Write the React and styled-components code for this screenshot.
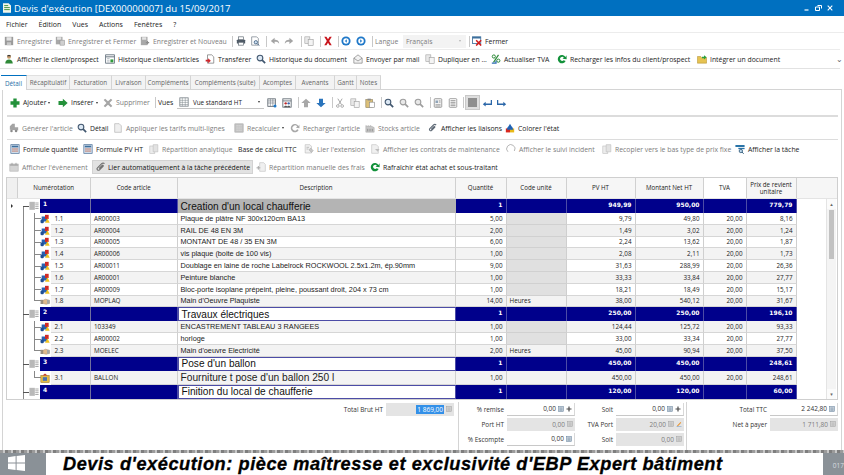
import React from "react";
import styled, { createGlobalStyle } from "styled-components";

const GlobalStyle = createGlobalStyle`
	html, body {
		margin: 0;
		padding: 0;
		background: #fff;
	}
	#root {
		width: 844px;
		height: 475px;
		overflow: hidden;
	}
`;

const UI = `"Open Sans", "Noto Sans", sans-serif`;
const NAVY = "#00008b";
const DIM = "#7d7d7d";

const Ico = ({ name, size = 10 }) => (
	<IconBox $size={size}>
		<svg width={size} height={size} viewBox="0 0 12 12">
			{shapes[name]}
		</svg>
	</IconBox>
);

const shapes = {
	save: <><rect x="1" y="1" width="10" height="10" fill="#9a9a9a" /><rect x="3" y="1.5" width="6" height="4" fill="#e4e4e4" /><rect x="3.5" y="7.5" width="5" height="3.5" fill="#c8c8c8" /></>,
	saveClose: <><rect x="1" y="1" width="8" height="9" fill="#a8a8a8" /><rect x="2.5" y="1.5" width="5" height="3" fill="#e4e4e4" /><rect x="6" y="5" width="5.5" height="6" fill="#cfcfcf" stroke="#8e8e8e" strokeWidth=".6" /></>,
	saveNew: <><rect x="1" y="1" width="8" height="10" fill="#a8a8a8" /><rect x="2.5" y="1.5" width="5" height="3" fill="#e4e4e4" /><path d="M7 8h4M9 6v4" stroke="#8c8c8c" strokeWidth="1.4" /></>,
	print: <><rect x="3" y="1" width="6" height="3.5" fill="#fff" stroke="#5c6670" strokeWidth=".8" /><rect x="1" y="4.5" width="10" height="4.5" rx=".6" fill="#4f5a66" /><rect x="3" y="7.5" width="6" height="3.5" fill="#fff" stroke="#5c6670" strokeWidth=".8" /></>,
	preview: <><path d="M2 1h6l2 2v8H2z" fill="#fff" stroke="#6b7580" strokeWidth=".8" /><circle cx="7" cy="7.5" r="2" fill="#cfe2f2" stroke="#3f5e80" /><path d="M8.5 9l2.5 2.5" stroke="#3f5e80" strokeWidth="1.2" /></>,
	back: <path d="M1 6l4.5-4v2.4c3 0 5.5 1 5.5 5-1.2-2-3-2.4-5.5-2.4V9.5z" fill="#a4a4a4" />,
	forward: <path d="M11 6L6.5 2v2.4c-3 0-5.5 1-5.5 5 1.2-2 3-2.4 5.5-2.4v2.5z" fill="#a4a4a4" />,
	copy: <><rect x="1" y="1" width="6" height="8" fill="#e8e8e8" stroke="#a0a0a0" strokeWidth=".7" /><rect x="5" y="4" width="6" height="7.5" fill="#f4f4f4" stroke="#9a9a9a" strokeWidth=".7" /></>,
	redX: <path d="M1.5 1h2.6L6 3.8 7.9 1h2.6L7.4 6l3.1 5H7.9L6 8.2 4.1 11H1.5l3.1-5z" fill="#c8141c" />,
	circleL: <><circle cx="6" cy="6" r="5.5" fill="#1f78c8" /><circle cx="6" cy="6" r="3.3" fill="#fff" /><path d="M7 3.8L4.6 6 7 8.2z" fill="#1f78c8" /></>,
	circleR: <><circle cx="6" cy="6" r="5.5" fill="#1f78c8" /><circle cx="6" cy="6" r="3.3" fill="#fff" /><path d="M5 3.8L7.4 6 5 8.2z" fill="#1f78c8" /></>,
	closeWin: <><rect x=".5" y="1" width="10" height="8" fill="#fff" stroke="#3d6f9c" /><rect x=".5" y="1" width="10" height="2" fill="#3d6f9c" /><path d="M5 5l6 6.5M11 5l-6 6.5" stroke="#d01c1c" strokeWidth="1.8" /></>,
	person: <><circle cx="6" cy="3.4" r="2.4" fill="#c79a6a" /><path d="M1.5 11.5c0-3.5 2-4.8 4.5-4.8s4.5 1.3 4.5 4.8z" fill="#2f8a38" /><path d="M3.6 2.6c.6-2 4.2-2 4.8 0z" fill="#3a3a3a" /></>,
	history: <><rect x=".8" y="1" width="10.4" height="10" fill="#fff" stroke="#4a5a68" strokeWidth=".9" /><path d="M1 3.4h10" stroke="#4a5a68" /><rect x="6.5" y="6.5" width="3.5" height="3.5" fill="#2f9a3c" /><path d="M2.5 5.5h3M2.5 7.5h3M2.5 9.5h3" stroke="#9aa4ac" strokeWidth=".8" /></>,
	transfer: <><path d="M3 1h5l2.5 2.5V11H3z" fill="#fff" stroke="#6a6a6a" strokeWidth=".8" /><path d="M.8 7h3V5l3.2 3-3.2 3V9h-3z" fill="#d0242a" /></>,
	search: <><circle cx="4.8" cy="4.8" r="3.4" fill="#dce8f4" stroke="#40566e" strokeWidth="1.3" /><path d="M7.4 7.4l3.6 3.6" stroke="#40566e" strokeWidth="2" /></>,
	searchDim: <><circle cx="4.8" cy="4.8" r="3.4" fill="#e8e8e8" stroke="#9d9d9d" strokeWidth="1.3" /><path d="M7.4 7.4l3.6 3.6" stroke="#9d9d9d" strokeWidth="2" /></>,
	mail: <><path d="M1 5l5-4 5 4v6H1z" fill="#f2f2f2" stroke="#7b7b7b" strokeWidth=".8" /><path d="M1 5l5 3.4L11 5" fill="none" stroke="#7b7b7b" strokeWidth=".8" /></>,
	tva: <><circle cx="3.4" cy="3" r="1.9" fill="none" stroke="#2e8a3a" strokeWidth="1.2" /><circle cx="8.8" cy="8" r="1.9" fill="none" stroke="#2e8a3a" strokeWidth="1.2" /><path d="M9 1L3 10" stroke="#2e8a3a" strokeWidth="1.4" /><path d="M1 11h5V8" fill="none" stroke="#2c6cb4" strokeWidth="1.5" /></>,
	reload: <path d="M10.2 3.6A5 5 0 1 0 10.4 8.4L8 7.4A2.4 2.4 0 1 1 8.2 4.4L6.6 5.6 11.6 6.4 11.4 1.4z" fill="#12913a" />,
	reloadDim: <path d="M10.2 3.6A5 5 0 1 0 10.4 8.4L8.6 7.6A3 3 0 1 1 8.6 4.6L7 5.8 11.4 6.2 11.2 1.8z" fill="#a8a8a8" />,
	folder: <><path d="M.5 3h4l1 1.4h6V11H.5z" fill="#e6c352" stroke="#ad8a2c" strokeWidth=".6" /><path d="M6 3.4h2.4V1.4L11.6 4 8.4 6.6V5H6z" fill="#2ca03c" /></>,
	plus: <path d="M4 .6h4V4h3.4v4H8v3.4H4V8H.6V4H4z" fill="#23913a" />,
	arrowR: <path d="M.6 3.6h5.2V.8L11.6 6l-5.8 5.2V8.4H.6z" fill="#23913a" />,
	greyX: <path d="M.8 2.4L2.6.8 6 4l3.4-3.2 1.8 1.6L7.8 6l3.4 3.6-1.8 1.6L6 8 2.6 11.2.8 9.6 4.2 6z" fill="#a6a6a6" />,
	table: <><rect x="1" y="1" width="10" height="10" fill="#fff" stroke="#7a8288" /><path d="M1 4h10M1 6.5h10M1 9h10M4 1v10M7.5 1v10" stroke="#7a8288" strokeWidth=".6" /></>,
	tableBlue: <><rect x="1" y="1" width="9" height="9" fill="#fff" stroke="#59636c" /><path d="M1 3.5h9M1 6h9M4 1v9M7 1v9" stroke="#59636c" strokeWidth=".6" /><circle cx="9.6" cy="9.6" r="1.8" fill="#1f78c8" /></>,
	tablePeople: <><rect x="1" y="1" width="10" height="10" fill="#fff" stroke="#59636c" /><path d="M1 3.5h10" stroke="#59636c" /><circle cx="4.4" cy="6.4" r="1.4" fill="#c02828" /><circle cx="8" cy="6.4" r="1.4" fill="#3a62a8" /><path d="M2.6 11c0-2.2 3.6-2.2 3.6 0zM6.2 11c0-2.2 3.6-2.2 3.6 0z" fill="#555" /></>,
	up: <path d="M6 .8L11.6 6H8.4v5.2H3.6V6H.4z" fill="#a8a8a8" />,
	down: <path d="M6 11.2L11.6 6H8.4V.8H3.6V6H.4z" fill="#2a74bc" />,
	scissors: <><path d="M3.4 .8L7.8 8M8.6 .8L4.2 8" stroke="#a0a0a0" strokeWidth="1.1" /><circle cx="3.4" cy="9.6" r="1.6" fill="none" stroke="#a0a0a0" strokeWidth="1" /><circle cx="8.6" cy="9.6" r="1.6" fill="none" stroke="#a0a0a0" strokeWidth="1" /></>,
	paste: <><rect x="1" y="2" width="8" height="9.4" fill="#dcc078" stroke="#8a7a50" strokeWidth=".7" /><rect x="3" y=".8" width="4" height="2.2" fill="#8a8a8a" /><rect x="5.4" y="5" width="6" height="6.6" fill="#fff" stroke="#808080" strokeWidth=".7" /></>,
	form: <><rect x="1.5" y=".8" width="9" height="10.4" rx="1" fill="#f2f2f2" stroke="#777" strokeWidth=".8" /><rect x="3" y="3" width="3" height="3" fill="#8fa4b8" /><path d="M3 8h6M3 9.6h6M7 3.4h2M7 5h2" stroke="#777" strokeWidth=".7" /></>,
	lines: <><rect x="1.5" y=".8" width="9" height="10.4" rx="1" fill="#fff" stroke="#777" strokeWidth=".8" /><path d="M3 3.2h6M3 5.2h6M3 7.2h6M3 9.2h6" stroke="#666" strokeWidth=".8" /></>,
	enterL: <path d="M10.5 2.5V6.6H4.4V4.6L1 7.4l3.4 2.8V8.4h7.9V2.5z" fill="#2a66a8" />,
	enterR: <path d="M1.5 2.5V6.6h6.1V4.6L11 7.4 7.6 10.2V8.4H-.2V2.5z" fill="#2a66a8" />,
	gen: <><path d="M1 8V4l3-3h3v4h4v4z" fill="#a4a4a4" /><circle cx="3" cy="9.5" r="1.5" fill="#8a8a8a" /><circle cx="8.5" cy="9.5" r="1.5" fill="#8a8a8a" /></>,
	doc: <path d="M2 .8h5.4L10 3.4v7.8H2z" fill="#efefef" stroke="#b4b4b4" strokeWidth=".8" />,
	calc: <><rect x="1" y="1" width="10" height="10" fill="#c2c2c2" stroke="#a0a0a0" strokeWidth=".6" /><path d="M3 3.4h6M3 6h6M3 8.6h6" stroke="#e8e8e8" strokeWidth="1" strokeDasharray="1.4 1" /></>,
	stocks: <><path d="M1 11V3l2.5 1.5V3L6 4.5V3l5 2.5V11z" fill="#c8c8c8" stroke="#a2a2a2" strokeWidth=".6" /><path d="M3 7v3M5 7v3M7 7v3M9 7v3" stroke="#8a8a8a" strokeWidth=".8" /></>,
	clip: <path d="M9.8 2.4c-1-1-2.4-.8-3.2 0L2.2 6.8c-1.4 1.4.8 3.4 2.2 2L8 5.2c.6-.6-.2-1.4-.8-.8L3.8 7.8" fill="none" stroke="#5f6a76" strokeWidth="1.3" />,
	clipBold: <path d="M10.2 2c-1-1-2.6-.8-3.4 0L1.8 7c-1.6 1.6.8 4 2.4 2.4l4.2-4.2c.8-.8-.2-1.8-1-1l-3.6 3.6" fill="none" stroke="#737373" strokeWidth="1.4" />,
	color: <><path d="M6 .8L9.5 7H2.5z" fill="#1f62b4" /><rect x="1" y="6.5" width="5" height="4.8" fill="#d8281e" /><rect x="6" y="6.5" width="5" height="4.8" fill="#e8b818" /><path d="M3.6 4.6h4.8L10 8H2z" fill="#1f62b4" /></>,
	calcBlue: <><rect x="1" y=".8" width="10" height="10.4" fill="#cfdcea" stroke="#4a6f96" strokeWidth=".8" /><rect x="2.2" y="2" width="7.6" height="2" fill="#3d6f9c" /><path d="M2.6 6h2M5 6h2M7.4 6h2M2.6 8.5h2M5 8.5h2M7.4 8.5h2" stroke="#c05a3c" strokeWidth="1" /></>,
	analytics: <><rect x="1" y="2.4" width="6" height="8.8" fill="#ececec" stroke="#bcbcbc" strokeWidth=".7" /><path d="M5 .8h5.6v8.6H5z" fill="#e2e2e2" stroke="#bcbcbc" strokeWidth=".7" /></>,
	ext: <><path d="M1.4 .8h5.6l2 2v8H1.4z" fill="#efefef" stroke="#b8b8b8" strokeWidth=".7" /><path d="M6 7l2-2 3 3-2 2zM3 4h3M3 6h2" stroke="#a8a8a8" strokeWidth=".8" fill="#c8c8c8" /></>,
	contract: <><path d="M2 .8h5.6L10 3.2v8H2z" fill="#f0f0f0" stroke="#bdbdbd" strokeWidth=".7" /><path d="M6 6h5.4L9.4 9.4z" fill="#bdbdbd" /></>,
	incident: <path d="M2.4 9.4A5 5 0 1 1 10 8.4" fill="none" stroke="#b0b0b0" strokeWidth="1.1" />,
	task: <><rect x=".5" y="1.2" width="11" height="2.4" fill="#2a74a8" /><rect x="4" y="4.6" width="7.5" height="1.6" fill="#2a74a8" /><circle cx="7" cy="8.4" r="2" fill="#bcd6ea" stroke="#2c5878" /><path d="M8.4 9.8l2 1.8" stroke="#2c5878" strokeWidth="1.2" /></>,
	event: <><rect x="1" y="2.4" width="10" height="8.6" fill="#d4d4d4" stroke="#aeaeae" strokeWidth=".7" /><rect x="1" y="2.4" width="10" height="2.4" fill="#b4b4b4" /><path d="M3.6 1v2.4M8.4 1v2.4" stroke="#9a9a9a" /></>,
	manual: <><path d="M4.4 .8h4.8l2 2v8.4H4.4z" fill="#f0f0f0" stroke="#bdbdbd" strokeWidth=".7" /><path d="M.6 7h4.6M2.8 4.8v4.4" stroke="#a8a8a8" strokeWidth="1.2" /></>,
	groupNode: <><rect x=".5" y="1" width="6.5" height="9.6" fill="#b8b8b8" /><path d="M7.5 2.4h4M7.5 4.6h4M7.5 6.8h4M7.5 9h4" stroke="#9a9a9a" /></>,
	article: <><rect x="2" y="3" width="6.4" height="6" fill="#2a62b0" /><rect x="6" y="1" width="4.4" height="5" fill="#d02a26" /><path d="M9 5l2.6 5.4H6z" fill="#eec21e" /><rect x=".6" y="6.6" width="4" height="4.6" rx="1.6" fill="#1f4e94" /></>,
	hand: <><path d="M.6 4.6h3.2v5H.6z" fill="#9a8e7e" /><path d="M3.8 5l3-1.2 4.6 1.6v3.4L7.4 10 3.8 9z" fill="#e0b98c" stroke="#9a7a58" strokeWidth=".5" /><path d="M8.4 4.6h3v4.8h-3z" fill="#a6a6a6" /></>,
	boiler: <><rect x="1" y="3" width="10" height="8.4" fill="#e4bc48" stroke="#9c7a26" strokeWidth=".7" /><path d="M3 3l3-2.4L9 3z" fill="#c43a2c" /><rect x="3.4" y="5" width="5" height="4.4" fill="#4a74b0" /></>,
	mini: <><rect x="1" y="1" width="10" height="10" fill="#cdd6de" stroke="#5f7c98" strokeWidth="1" /><path d="M3 4h6M3 6.4h6M3 8.6h6" stroke="#5f7c98" strokeWidth=".9" /></>,
	miniDim: <><rect x="1" y="1" width="10" height="10" fill="#d4d4d4" stroke="#a0a0a0" strokeWidth="1" /><path d="M3 4h6M3 6.4h6M3 8.6h6" stroke="#a8a8a8" strokeWidth=".9" /></>,
	add: <path d="M4.8 1h2.4v3.8H11v2.4H7.2V11H4.8V7.2H1V4.8h3.8z" fill="#4a4a4a" />,
	pencil: <><path d="M2 9.6L9 2.2l1.4 1.4-7 7.2z" fill="#e8922c" /><path d="M1 11.4h10" stroke="#3c7cc0" strokeWidth=".9" /></>,
};

const TOP_ONE = [
	{ icon: "save", label: "Enregistrer", w: 51, dim: true },
	{ icon: "saveClose", label: "Enregistrer et Fermer", w: 85, dim: true },
	{ icon: "saveNew", label: "Enregistrer et Nouveau", w: 89, dim: true },
	{ sep: 7 },
	{ icon: "print", w: 14 },
	{ icon: "preview", w: 13 },
	{ sep: 7 },
	{ icon: "back", w: 14 },
	{ icon: "forward", w: 14 },
	{ sep: 6 },
	{ icon: "copy", w: 13 },
	{ sep: 6 },
	{ icon: "redX", w: 13 },
	{ sep: 5 },
	{ icon: "circleL", w: 15 },
	{ icon: "circleR", w: 13 },
	{ sep: 6 },
];

const TOP_TWO = [
	{ icon: "person", label: "Afficher le client/prospect", w: 101 },
	{ icon: "history", label: "Historique clients/articles", w: 100 },
	{ icon: "transfer", label: "Transférer", w: 51 },
	{ icon: "search", label: "Historique du document", w: 97 },
	{ icon: "mail", label: "Envoyer par mail", w: 72 },
	{ icon: "copy", label: "Dupliquer en ...", w: 66 },
	{ icon: "tva", label: "Actualiser TVA", w: 66 },
	{ icon: "reload", label: "Recharger les infos du client/prospect", w: 140 },
	{ icon: "folder", label: "Intégrer un document", w: 90 },
];

const TABS = [
	["Détail", 26],
	["Récapitulatif", 43],
	["Facturation", 42],
	["Livraison", 34],
	["Compléments", 45],
	["Compléments (suite)", 69],
	["Acomptes", 36],
	["Avenants", 39],
	["Gantt", 22],
	["Notes", 24],
];

const ROW_B = [
	{ icon: "gen", label: "Générer l'article", w: 68, dim: true },
	{ icon: "search", label: "Détail", w: 36 },
	{ icon: "doc", label: "Appliquer les tarifs multi-lignes", w: 121, dim: true },
	{ icon: "calc", label: "Recalculer", w: 56, dim: true, caret: true },
	{ icon: "reloadDim", label: "Recharger l'article", w: 75, dim: true },
	{ icon: "stocks", label: "Stocks article", w: 63, dim: true },
	{ icon: "clip", label: "Afficher les liaisons", w: 77 },
	{ icon: "color", label: "Colorer l'état", w: 70 },
];

const ROW_C = [
	{ icon: "calcBlue", label: "Formule quantité", w: 73 },
	{ icon: "calcBlue", label: "Formule PV HT", w: 66 },
	{ icon: "analytics", label: "Répartition analytique", w: 89, dim: true },
	{ label: "Base de calcul TTC", w: 66 },
	{ icon: "ext", label: "Lier l'extension", w: 66, dim: true },
	{ icon: "contract", label: "Afficher les contrats de maintenance", w: 136, dim: true },
	{ icon: "incident", label: "Afficher le suivi incident", w: 96, dim: true },
	{ icon: "analytics", label: "Recopier vers le bas type de prix fixe", w: 133, dim: true },
	{ icon: "task", label: "Afficher la tâche", w: 70 },
];

const COLUMNS = ["Numérotation", "Code article", "Description", "Quantité", "Code unité", "PV HT", "Montant Net HT", "TVA", "Prix de revient unitaire"];

const ROWS = [
	{ group: true, grey: true, num: "1", desc: "Creation d'un local chaufferie", qty: "1", pv: "949,99", net: "950,00", cost: "779,79", selected: true },
	{ num: "1.1", icon: "article", code: "AR00003", desc: "Plaque de plâtre NF 300x120cm BA13", qty: "5,00", pv: "9,79", net: "49,80", cost: "8,16" },
	{ num: "1.2", icon: "article", code: "AR00004", desc: "RAIL DE 48 EN 3M", qty: "2,00", pv: "1,49", net: "3,02", cost: "1,24", alt: true },
	{ num: "1.3", icon: "article", code: "AR00005", desc: "MONTANT DE 48 / 35 EN 3M", qty: "6,00", pv: "2,24", net: "13,62", cost: "1,87" },
	{ num: "1.4", icon: "article", code: "AR00006", desc: "vis plaque (boite de 100 vis)", qty: "1,00", pv: "2,08", net: "2,11", cost: "1,73", alt: true },
	{ num: "1.5", icon: "article", code: "AR00011", desc: "Doublage en laine de roche Labelrock ROCKWOOL 2.5x1.2m, ép.90mm", qty: "9,00", pv: "31,63", net: "288,99", cost: "26,36" },
	{ num: "1.6", icon: "article", code: "AR00001", desc: "Peinture blanche", qty: "1,00", pv: "33,33", net: "33,84", cost: "27,77", alt: true },
	{ num: "1.7", icon: "article", code: "AR00009", desc: "Bloc-porte isoplane prépeint, pleine, poussant droit, 204 x 73 cm", qty: "1,00", pv: "18,21", net: "18,49", cost: "15,17" },
	{ num: "1.8", icon: "hand", code: "MOPLAQ", desc: "Main d'Oeuvre Plaquiste", qty: "14,00", unit: "Heures", pv: "38,00", net: "540,12", cost: "31,67", alt: true, last: true },
	{ group: true, num: "2", desc: "Travaux électriques", qty: "1", pv: "250,00", net: "250,00", cost: "196,10" },
	{ num: "2.1", icon: "article", code: "103349", desc: "ENCASTREMENT TABLEAU 3 RANGEES", qty: "1,00", pv: "124,44", net: "125,72", cost: "93,33", alt: true },
	{ num: "2.2", icon: "article", code: "AR00002", desc: "horloge", qty: "1,00", pv: "33,00", net: "33,34", cost: "27,77" },
	{ num: "2.3", icon: "hand", code: "MOELEC", desc: "Main d'oeuvre Electricité", qty: "2,00", unit: "Heures", pv: "45,00", net: "90,94", cost: "37,50", alt: true, last: true },
	{ group: true, num: "3", desc: "Pose d'un ballon", qty: "1", pv: "450,00", net: "450,00", cost: "248,61" },
	{ num: "3.1", icon: "boiler", code: "BALLON", desc: "Fourniture t pose d'un ballon 250 l", qty: "1,00", unit: "", pv: "450,00", net: "450,00", cost: "248,61", alt: true, large: true, last: true },
	{ group: true, num: "4", desc: "Finition du local de chaufferie", qty: "1", pv: "120,00", net: "120,00", cost: "60,00" },
];

const Tools = ({ items }) =>
	items.map((it, i) =>
		it.sep ? (
			<ToolSep key={i} $w={it.sep} />
		) : (
			<Tool key={i} $w={it.w} $dim={it.dim}>
				{it.icon && <Ico name={it.icon} />}
				{it.label && <span>{it.label}</span>}
				{it.caret && <Caret />}
			</Tool>
		)
	);

const GridRow = ({ row }) => {
	if (row.group) {
		return (
			<Row $h={14}>
				<SelectorCell>{row.selected && <RowArrow />}</SelectorCell>
				<TreeCell $group $top={row.num === "1"}>
					<Ico name="groupNode" />
				</TreeCell>
				<GroupNum>{row.num}</GroupNum>
				<GroupCell />
				<DescGroup $grey={row.grey}>{row.desc}</DescGroup>
				<GroupCell $right>{row.qty}</GroupCell>
				<GroupCell />
				<GroupCell $right>{row.pv}</GroupCell>
				<GroupCell $right>{row.net}</GroupCell>
				<GroupCell />
				<GroupCell $right>{row.cost}</GroupCell>
			</Row>
		);
	}
	return (
		<Row $h={row.large ? 14 : 11.8}>
			<SelectorCell />
			<TreeCell $last={row.last}>
				<Ico name={row.icon} />
			</TreeCell>
			<NumCell $alt={row.alt}>{row.num}</NumCell>
			<TextCell $alt={row.alt}>{row.code}</TextCell>
			<DescCell $alt={row.alt} $large={row.large}>{row.desc}</DescCell>
			<NumberCell $alt={row.alt}>{row.qty}</NumberCell>
			<UnitCell $alt={row.alt} $free={row.unit !== undefined}>{row.unit}</UnitCell>
			<NumberCell $alt={row.alt}>{row.pv}</NumberCell>
			<NumberCell $alt={row.alt}>{row.net}</NumberCell>
			<NumberCell $alt={row.alt}>20,00</NumberCell>
			<NumberCell $alt={row.alt}>{row.cost}</NumberCell>
		</Row>
	);
};

const Amount = ({ label, value, grey, icons = ["mini"], selected }) => (
	<FieldRow>
		{label && <FieldLabel>{label}</FieldLabel>}
		<Field $grey={grey}>
			<FieldValue>{selected ? <Selected>{value}</Selected> : value}</FieldValue>
			{icons.map((n, i) => (
				<Ico key={i} name={n} size={6} />
			))}
		</Field>
	</FieldRow>
);

export default function App() {
	return (
		<Page>
			<GlobalStyle />
			<TitleBar>
				<TitleIcon viewBox="0 0 10 12" width="8" height="10">
					<path d="M0 0h7l3 3v9H0z" fill="#f2f6ea" />
					<path d="M1.5 3h5M1.5 5.5h7M1.5 8h7" stroke="#3f8f3f" strokeWidth="1.2" />
				</TitleIcon>
				<TitleText>Devis d'exécution [DEX00000007] du 15/09/2017</TitleText>
				<WindowButtons>
					<svg width="6" height="6" viewBox="0 0 6 6"><path d="M.5 5h4" stroke="#fff" strokeWidth="1.2" /></svg>
					<svg width="7" height="6" viewBox="0 0 7 6"><path d="M2.5.5h4v3M.5 2h4v3.5h-4z" fill="none" stroke="#fff" /></svg>
					<svg width="6" height="6" viewBox="0 0 6 6"><path d="M.7.7l4.6 4.6M5.3.7L.7 5.3" stroke="#fff" strokeWidth="1.1" /></svg>
				</WindowButtons>
			</TitleBar>
			<MenuBar>
				{["Fichier", "Édition", "Vues", "Actions", "Fenêtres", "?"].map((m) => (
					<span key={m}>{m}</span>
				))}
			</MenuBar>
			<Toolbar $h={17}>
				<Tools items={TOP_ONE} />
				<PlainLabel $w={28} $dim>Langue</PlainLabel>
				<LangSelect>
					<span>Français</span>
					<Caret $dim />
				</LangSelect>
				<ToolSep $w={6} />
				<Tool $w={40}>
					<Ico name="closeWin" />
					<span>Fermer</span>
				</Tool>
			</Toolbar>
			<Toolbar $h={20} $line>
				<Tools items={TOP_TWO} />
				<Chevron>⌄</Chevron>
			</Toolbar>
			<Tabs>
				{TABS.map(([label, w], i) => (
					<Tab key={label} $w={w} $active={i === 0}>{label}</Tab>
				))}
			</Tabs>
			<Panel>
				<ActionRow $h={25} $pad={7}>
					<Tool $w={48}><Ico name="plus" /><span>Ajouter</span><Caret /></Tool>
					<Tool $w={45}><Ico name="arrowR" /><span>Insérer</span><Caret /></Tool>
					<Tool $w={49} $dim><Ico name="greyX" /><span>Supprimer</span></Tool>
					<ToolSep $w={6} />
					<PlainLabel $w={19}>Vues</PlainLabel>
					<ViewSelect>
						<Ico name="table" />
						<span>Vue standard HT</span>
						<Caret />
					</ViewSelect>
					<Spacer $w={3} />
					<Tool $w={15}><Ico name="tableBlue" /></Tool>
					<Tool $w={14}><Ico name="tablePeople" /></Tool>
					<ToolSep $w={5} />
					<Tool $w={15}><Ico name="up" /></Tool>
					<Tool $w={14}><Ico name="down" /></Tool>
					<ToolSep $w={5} />
					<Tool $w={15}><Ico name="scissors" /></Tool>
					<Tool $w={15}><Ico name="copy" /></Tool>
					<Tool $w={14}><Ico name="paste" /></Tool>
					<ToolSep $w={5} />
					<Tool $w={15}><Ico name="search" /></Tool>
					<Tool $w={15}><Ico name="searchDim" /></Tool>
					<Tool $w={14}><Ico name="searchDim" /></Tool>
					<ToolSep $w={5} />
					<Tool $w={15}><Ico name="form" /></Tool>
					<Tool $w={14}><Ico name="lines" /></Tool>
					<ToolSep $w={3} />
					<PressedBlock><span /></PressedBlock>
					<Spacer $w={2} />
					<Tool $w={15}><Ico name="enterL" /></Tool>
					<Tool $w={15}><Ico name="enterR" /></Tool>
				</ActionRow>
				<Divider $size={2} />
				<ActionRow $h={22} $pad={6}>
					<Tools items={ROW_B} />
				</ActionRow>
				<Divider $size={1} />
				<ActionRow $h={18} $pad={7}>
					<Tools items={ROW_C} />
				</ActionRow>
				<ActionRow $h={18} $pad={6}>
					<Tool $w={83} $dim><Ico name="event" /><span>Afficher l'évènement</span></Tool>
					<ActiveTool><Ico name="clipBold" /><span>Lier automatiquement à la tâche précédente</span></ActiveTool>
					<Tool $w={114} $dim><Ico name="manual" /><span>Répartition manuelle des frais</span></Tool>
					<Tool $w={130}><Ico name="reload" /><span>Rafraîchir état achat et sous-traitant</span></Tool>
				</ActionRow>
				<GridFrame>
					<GridBody>
						<Header>
							<HeaderBlank />
							{COLUMNS.map((c) => (
								<HeaderCell key={c} $white={c === "TVA"}>{c}</HeaderCell>
							))}
						</Header>
						{ROWS.map((r) => (
							<GridRow key={r.num} row={r} />
						))}
					</GridBody>
					<GridSide>
						<SideHeader />
						<SideBody>
							<Blank />
							<Scrollbar>
								<ScrollBtn>▴</ScrollBtn>
								<ScrollTrack><ScrollThumb /></ScrollTrack>
								<ScrollBtn>▾</ScrollBtn>
							</Scrollbar>
						</SideBody>
					</GridSide>
				</GridFrame>
				<Totals>
					<TotalBlock $w={455} $pad={4}>
						<Amount label="Total Brut HT" value="1 869,00" grey selected icons={["miniDim"]} />
					</TotalBlock>
					<TotalBlock $w={120} $pad={3} $sep>
						<Amount label="% remise" value="0,00" icons={["mini", "add"]} />
						<Amount label="Port HT" value="0,00" grey icons={["miniDim"]} />
						<Amount label="% Escompte" value="0,00" icons={["mini"]} />
					</TotalBlock>
					<TotalBlock $w={108} $pad={2}>
						<Amount label="Soit" value="0,00" icons={["mini", "add"]} />
						<Amount label="TVA Port" value="20,00" grey icons={["miniDim", "pencil"]} />
						<Amount label="Soit" value="0,00" grey icons={["miniDim"]} />
					</TotalBlock>
					<TotalBlock $w={155} $pad={3} $sep>
						<Amount label="Total TTC" value="2 242,80" icons={["mini"]} />
						<Amount label="Net à payer" value="1 711,80" grey icons={["miniDim"]} />
					</TotalBlock>
				</Totals>
			</Panel>
			<Taskbar>
				<StartArea>
					<svg width="17" height="16" viewBox="0 0 17 16">
						<path d="M0 2.2L7.6 1v6.4H0zM8.6.9L17 0v7.4H8.6zM0 8.4h7.6V15L0 14zM8.6 8.4H17V16l-8.4-1.1z" fill="#fff" />
					</svg>
				</StartArea>
				<Caption>Devis d'exécution: pièce maîtresse et exclusivité d'EBP Expert bâtiment</Caption>
				<ClockText>017</ClockText>
			</Taskbar>
		</Page>
	);
}

const Page = styled.div`
	width: 844px;
	height: 475px;
	display: flex;
	flex-direction: column;
	overflow: hidden;
	background: #fff;
	font-family: ${UI};
	font-size: 6.85px;
	color: #1c1c1c;
`;

const IconBox = styled.span`
	display: inline-flex;
	flex: 0 0 ${(p) => p.$size}px;
	width: ${(p) => p.$size}px;
	height: ${(p) => p.$size}px;
`;

const TitleBar = styled.div`
	flex: 0 0 16px;
	display: flex;
	align-items: center;
	padding: 0 11px 0 3px;
	background: #0070c0;
	color: #fff;
`;

const TitleIcon = styled.svg`
	margin-right: 3px;
`;

const TitleText = styled.span`
	font-size: 9.6px;
`;

const WindowButtons = styled.div`
	margin-left: auto;
	display: flex;
	align-items: center;
	gap: 5px;
`;

const MenuBar = styled.div`
	flex: 0 0 16px;
	display: flex;
	align-items: center;
	gap: 11px;
	padding-left: 6px;
	font-size: 7px;
`;

const Toolbar = styled.div`
	flex: 0 0 ${(p) => p.$h}px;
	display: flex;
	align-items: center;
	padding-left: 4px;
	border-top: 1px solid #ececec;
	${(p) => p.$line && `border-bottom: 1px solid #e2e2e2; margin-right: 4px;`}
	box-sizing: border-box;
`;

const Tool = styled.div`
	flex: 0 0 ${(p) => p.$w}px;
	width: ${(p) => p.$w}px;
	display: flex;
	align-items: center;
	gap: 3px;
	white-space: nowrap;
	color: ${(p) => (p.$dim ? DIM : "#1c1c1c")};
`;

const ToolSep = styled.div`
	flex: 0 0 ${(p) => p.$w}px;
	height: 11px;
	background: linear-gradient(#c8c8c8, #c8c8c8) center / 1px 100% no-repeat;
`;

const PlainLabel = styled.span`
	flex: 0 0 ${(p) => p.$w}px;
	color: ${(p) => (p.$dim ? DIM : "#1c1c1c")};
`;

const Spacer = styled.div`
	flex: 0 0 ${(p) => p.$w}px;
`;

const Caret = styled.i`
	margin-left: -1px;
	width: 0;
	height: 0;
	border-left: 1.8px solid transparent;
	border-right: 1.8px solid transparent;
	border-top: 2.2px solid ${(p) => (p.$dim ? "#b4b4b4" : "#333")};
`;

const LangSelect = styled.div`
	flex: 0 0 63px;
	height: 13px;
	display: flex;
	align-items: center;
	justify-content: space-between;
	padding: 0 5px 0 3px;
	box-sizing: border-box;
	background: #f3f3f3;
	color: ${DIM};
`;

const ViewSelect = styled.div`
	flex: 0 0 87px;
	height: 13px;
	display: flex;
	align-items: center;
	gap: 4px;
	padding: 0 4px 0 2px;
	box-sizing: border-box;
	border-bottom: 1px solid #c4c4c4;
	font-size: 6.3px;

	${Caret} {
		margin-left: auto;
	}
`;

const Chevron = styled.span`
	margin-left: auto;
	margin-right: -3px;
	color: #666;
	font-size: 8px;
	line-height: 1;
`;

const Tabs = styled.div`
	margin-top: 6px;
	flex: 0 0 14px;
	display: flex;
	padding-left: 1px;
`;

const Tab = styled.div`
	flex: 0 0 ${(p) => p.$w}px;
	box-sizing: border-box;
	display: flex;
	align-items: center;
	justify-content: center;
	background: ${(p) => (p.$active ? "#fff" : "#f3f3f3")};
	border-right: 1px solid #d4d4d4;
	border-top: ${(p) => (p.$active ? "1px solid #0070c0" : "1px solid #e0e0e0")};
	color: ${(p) => (p.$active ? "#2a6fa8" : "#666")};
	font-size: 6.3px;
	position: relative;
	z-index: ${(p) => (p.$active ? 1 : 0)};
	margin-bottom: ${(p) => (p.$active ? "-1px" : "0")};
`;

const Panel = styled.div`
	flex: 1;
	margin: 0 2px;
	display: flex;
	flex-direction: column;
	min-height: 0;
	border: 1px solid #d4d4d4;
	border-bottom: none;
`;

const ActionRow = styled.div`
	flex: 0 0 ${(p) => p.$h}px;
	display: flex;
	align-items: center;
	padding-left: ${(p) => p.$pad}px;
`;

const Divider = styled.div`
	flex: 0 0 ${(p) => p.$size}px;
	margin: 0 3px 0 4px;
	background: #dcdcdc;
`;

const PressedBlock = styled.div`
	flex: 0 0 15px;
	height: 15px;
	display: flex;
	align-items: center;
	justify-content: center;
	background: #dedede;
	border: 1px solid #c8c8c8;
	box-sizing: border-box;

	span {
		width: 9px;
		height: 9px;
		background: #8e8e8e;
	}
`;

const ActiveTool = styled.div`
	flex: 0 0 161px;
	height: 14px;
	margin-right: 3px;
	padding-left: 3px;
	box-sizing: border-box;
	display: flex;
	align-items: center;
	gap: 2px;
	white-space: nowrap;
	background: #e2e2e2;
	border: 1px solid #d2d2d2;
	color: #111;
`;

const GridFrame = styled.div`
	flex: 0 0 auto;
	margin: 1px 0 0 3px;
	width: 832px;
	display: flex;
	box-sizing: border-box;
	border: 1px solid #cfcfcf;
`;

const GridBody = styled.div`
	flex: 0 0 789px;
	display: flex;
	flex-direction: column;
`;

const COLS = "10.5px 22.5px 10.5px 40.5px 86.5px 278px 51px 60px 69px 68px 43px 50px";

const Header = styled.div`
	display: grid;
	grid-template-columns: 10.5px 73.5px 86.5px 278px 51px 60px 69px 68px 43px 50px;
	height: 21px;
	background: #f6f6f6;
	border-bottom: 1px solid #e4e4e4;
	box-sizing: border-box;
`;

const HeaderBlank = styled.div`
	border-right: 1px solid #d0d0d0;
	background: #f0f0f0;
`;

const HeaderCell = styled.div`
	display: flex;
	align-items: center;
	justify-content: center;
	text-align: center;
	line-height: 7.5px;
	padding: 0 3px;
	box-sizing: border-box;
	font-size: 6.2px;
	color: #222;
	border-right: 1px solid #d0d0d0;
	background: ${(p) => (p.$white ? "#fff" : "transparent")};
`;

const Row = styled.div`
	display: grid;
	grid-template-columns: ${COLS};
	height: ${(p) => p.$h}px;
`;

const SelectorCell = styled.div`
	display: flex;
	align-items: center;
	justify-content: center;
	background: #fff;
`;

const RowArrow = styled.i`
	width: 0;
	height: 0;
	border-top: 2px solid transparent;
	border-bottom: 2px solid transparent;
	border-left: 2.5px solid #333;
`;

/* tree column; item icons hang over the narrow slot next to it */
const TreeCell = styled.div`
	position: relative;
	background: #fff;
	display: flex;
	align-items: center;
	justify-content: flex-end;
	margin-right: ${(p) => (p.$group ? "0" : "-10.5px")};
	z-index: 1;

	&::before {
		content: "";
		position: absolute;
		left: 5px;
		top: ${(p) => (p.$top ? "50%" : "0")};
		bottom: 0;
		width: 1px;
		background: #888;
	}

	&::after {
		content: "";
		position: absolute;
		box-sizing: border-box;
		top: ${(p) => (p.$group ? "50%" : "0")};
		left: ${(p) => (p.$group ? "5px" : "16px")};
		width: ${(p) => (p.$group ? "6px" : "7px")};
		height: ${(p) => (p.$group ? "1px" : p.$last ? "50%" : "100%")};
		background: ${(p) => (p.$group ? "#555" : "none")};
		${(p) => !p.$group && `border-left: 1px solid #888;`}
		${(p) => p.$last && `border-bottom: 1px solid #888;`}
		${(p) => !p.$group && !p.$last && `background: linear-gradient(#888, #888) 0 50% / 100% 1px no-repeat;`}
	}

	${IconBox} {
		position: relative;
		z-index: 1;
		margin-right: 1px;
	}
`;

const GroupNum = styled.div`
	grid-column: 3 / span 2;
	background: ${NAVY};
	color: #fff;
	font: bold 6px "DejaVu Sans", sans-serif;
	padding: 1px 0 0 3px;
	border-right: 1px solid #6f6f9e;
`;

const GroupCell = styled.div`
	background: ${NAVY};
	color: #fff;
	font: bold 6px "DejaVu Sans", sans-serif;
	text-align: right;
	padding: 2px 3px 0 0;
	border-right: 1px solid #4c4ca6;
	box-sizing: border-box;
`;

const DescGroup = styled.div`
	display: flex;
	align-items: center;
	padding-left: 3px;
	box-sizing: border-box;
	font: 10.1px "Liberation Sans", sans-serif;
	color: #111;
	white-space: nowrap;
	background: ${(p) => (p.$grey ? "#b4b4b4" : "#fff")};
	border: ${(p) => (p.$grey ? "none" : "1px solid #4c4ca6")};
`;

const cellBg = (p) => (p.$alt ? "#f3f3f3" : "#fff");

const NumCell = styled.div`
	grid-column: 4;
	display: flex;
	align-items: center;
	padding-left: 4px;
	background: ${cellBg};
	border-bottom: 1px solid #d6d6d6;
	box-sizing: border-box;
	font-size: 6.4px;
	color: #222;
	border-right: 1px solid #cfcfcf;
`;

const TextCell = styled.div`
	display: flex;
	align-items: center;
	padding-left: 3px;
	box-sizing: border-box;
	background: ${cellBg};
	border-bottom: 1px solid #d6d6d6;
	border-right: 1px solid #cfcfcf;
	font-size: 6.3px;
	color: #222;
`;

const DescCell = styled(TextCell)`
	font: ${(p) => (p.$large ? "10.2px" : "7.3px")} "Liberation Sans", sans-serif;
	white-space: nowrap;
	overflow: hidden;
`;

const NumberCell = styled(TextCell)`
	justify-content: flex-end;
	padding: 0 3px 0 0;
`;

const UnitCell = styled(TextCell)`
	background: ${(p) => (p.$free ? cellBg(p) : "#e0e0e0")};
	border-bottom-color: #d0d0d0;
`;

const GridSide = styled.div`
	flex: 1;
	display: flex;
	flex-direction: column;
`;

const SideHeader = styled.div`
	flex: 0 0 21px;
	background: #f6f6f6;
	border-bottom: 1px solid #e4e4e4;
	box-sizing: border-box;
`;

const SideBody = styled.div`
	flex: 1;
	display: flex;
`;

const Blank = styled.div`
	flex: 1;
	background: #fff;
`;

const Scrollbar = styled.div`
	flex: 0 0 10px;
	display: flex;
	flex-direction: column;
	background: #f4f4f4;
	border-left: 1px solid #e4e4e4;
	box-sizing: border-box;
	margin-right: 1px;
`;

const ScrollBtn = styled.div`
	flex: 0 0 10px;
	display: flex;
	align-items: center;
	justify-content: center;
	font: 5px "DejaVu Sans", sans-serif;
	color: #666;
	background: #fbfbfb;
`;

const ScrollTrack = styled.div`
	flex: 1;
	padding: 1px 2px 0;
`;

const ScrollThumb = styled.div`
	height: 49px;
	background: #c2c2c2;
`;

const Totals = styled.div`
	flex: 1;
	display: flex;
	padding-top: 2px;
	min-height: 0;
`;

const TotalBlock = styled.div`
	flex: 0 0 ${(p) => p.$w}px;
	display: flex;
	flex-direction: column;
	padding-right: ${(p) => p.$pad}px;
	box-sizing: border-box;
	${(p) => p.$sep && `border-left: 1px solid #d4d4d4;`}
`;

const FieldRow = styled.div`
	flex: 0 0 15px;
	display: flex;
	align-items: center;
	justify-content: flex-end;
	gap: 3px;
`;

const FieldLabel = styled.span`
	color: #333;
	font-size: 6.4px;
`;

const Field = styled.div`
	flex: 0 0 68px;
	height: 13px;
	box-sizing: border-box;
	display: flex;
	align-items: center;
	gap: 2px;
	padding-right: 2px;
	background: ${(p) => (p.$grey ? "#e4e4e4" : "#fff")};
	border-bottom: ${(p) => (p.$grey ? "none" : "1px solid #c8c8c8")};
	border-right: ${(p) => (p.$grey ? "none" : "1px solid #d8d8d8")};
	color: ${(p) => (p.$grey ? DIM : "#333")};
	font-size: 6.5px;
`;

const FieldValue = styled.span`
	flex: 1;
	text-align: right;
`;

const Selected = styled.span`
	background: #3390e8;
	color: #fff;
	padding: 0 1px;
`;

const Taskbar = styled.div`
	flex: 0 0 25px;
	display: flex;
	background:
		repeating-linear-gradient(90deg, #9b9b9b 0 3px, #c8c8c8 3px 5px, #7e7e7e 5px 8px) top / 100% 3px no-repeat,
		#8a9197;
`;

const StartArea = styled.div`
	flex: 0 0 46px;
	padding: 5px 0 0 8px;
	box-sizing: border-box;
`;

const Caption = styled.div`
	flex: 0 0 777px;
	margin-top: 3px;
	padding-left: 17px;
	box-sizing: border-box;
	background: #fff;
	color: #000;
	font: italic bold 18.2px/22px "Liberation Sans", sans-serif;
	letter-spacing: 0.55px;
	-webkit-text-stroke: 0.3px #000;
	white-space: nowrap;
	overflow: hidden;
`;

const ClockText = styled.div`
	flex: 1;
	padding-top: 11px;
	text-align: right;
	font-size: 6.5px;
	color: #d8dce0;
`;
